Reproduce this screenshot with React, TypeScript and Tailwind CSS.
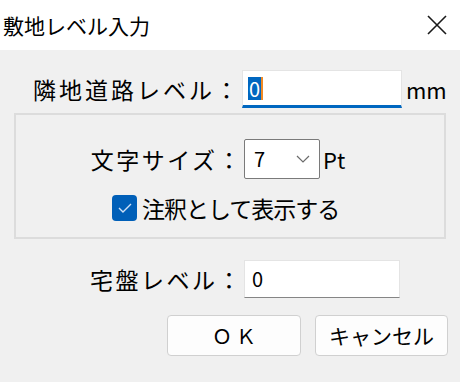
import React from "react";

const jp = { fontFamily: '"Noto Sans CJK JP", "Noto Sans", sans-serif' };

const CloseIcon = () => (
  <svg width="20" height="20" viewBox="0 0 20 20">
    <path d="M1 1 L19 19 M19 1 L1 19" stroke="#1a1a1a" strokeWidth="1.6" fill="none" />
  </svg>
);

export default function App() {
  return (
    <div className="w-[460px] h-[382px] bg-[#f0f0f0] text-black overflow-hidden" style={jp}>
      {/* title bar */}
      <div className="h-[50px] bg-white flex items-center justify-between pl-[3px] pr-[13px]">
        <span className="text-[21px] leading-none">敷地レベル入力</span>
        <CloseIcon />
      </div>

      {/* 隣地道路レベル */}
      <div className="mt-[20px] flex items-center h-[38px]">
        <span className="w-[242px] text-right text-[23px] leading-none tracking-[3px] pr-[1px]">
          隣地道路レベル：
        </span>
        <div className="w-[160px] h-[38px] bg-white border border-[#e4e4e4] border-b-[3px] border-b-[#0067c0] flex items-center">
          <span className="ml-[5px] flex items-center h-[23px]">
            <span className="bg-[#0067c0] text-white text-[20px] leading-[23px] px-[1px]">0</span>
            <span className="w-[2px] h-[23px] bg-[#f08a24]" />
          </span>
        </div>
        <span className="ml-[4px] text-[22px] leading-none">mm</span>
      </div>

      {/* group box */}
      <div className="mx-[14px] mt-[5px] h-[126px] border-2 border-[#dcdcdc] pt-[24px]">
        <div className="flex items-center h-[40px]">
          <span className="w-[228px] text-right text-[23px] leading-none tracking-[2.5px] pr-[1px]">
            文字サイズ：
          </span>
          <div className="w-[76px] h-[40px] bg-white border border-[#7a7a7a] rounded-[2px] flex items-center justify-between pl-[9px] pr-[9px]">
            <span className="text-[20px] leading-none">7</span>
            <svg width="14" height="8" viewBox="0 0 14 8">
              <path d="M1 1 L7 7 L13 1" stroke="#6b6b6b" strokeWidth="1.2" fill="none" />
            </svg>
          </div>
          <span className="ml-[3px] text-[22px] leading-none">Pt</span>
        </div>
        <div className="mt-[16px] flex items-center pl-[96px]">
          <span className="w-[25px] h-[26px] rounded-[4px] bg-[#005fb8] flex items-center justify-center">
            <svg width="14" height="10" viewBox="0 0 14 10">
              <path d="M1 5 L5 9 L13 1" stroke="#cfe1f6" strokeWidth="1.4" fill="none" />
            </svg>
          </span>
          <span className="ml-[5px] text-[23px] leading-none tracking-[-1px]">注釈として表示する</span>
        </div>
      </div>

      {/* 宅盤レベル */}
      <div className="mt-[21px] flex items-center h-[38px]">
        <span className="w-[244px] text-right text-[23px] leading-none tracking-[2.5px] pr-[1px]">
          宅盤レベル：
        </span>
        <div className="w-[156px] h-[38px] bg-white border border-[#e4e4e4] border-b-[#858585] flex items-center pl-[7px]">
          <span className="text-[20px] leading-none">0</span>
        </div>
      </div>

      {/* buttons */}
      <div className="mt-[17px] flex justify-end gap-[14px] pr-[12px]">
        <button className="w-[134px] h-[41px] bg-[#fdfdfd] border border-[#d0d0d0] rounded-[4px] text-[20px] leading-none tracking-[4px] pl-[4px]">
          ＯＫ
        </button>
        <button className="w-[133px] h-[41px] bg-[#fdfdfd] border border-[#d0d0d0] rounded-[4px] text-[21px] leading-none">
          キャンセル
        </button>
      </div>
    </div>
  );
}
